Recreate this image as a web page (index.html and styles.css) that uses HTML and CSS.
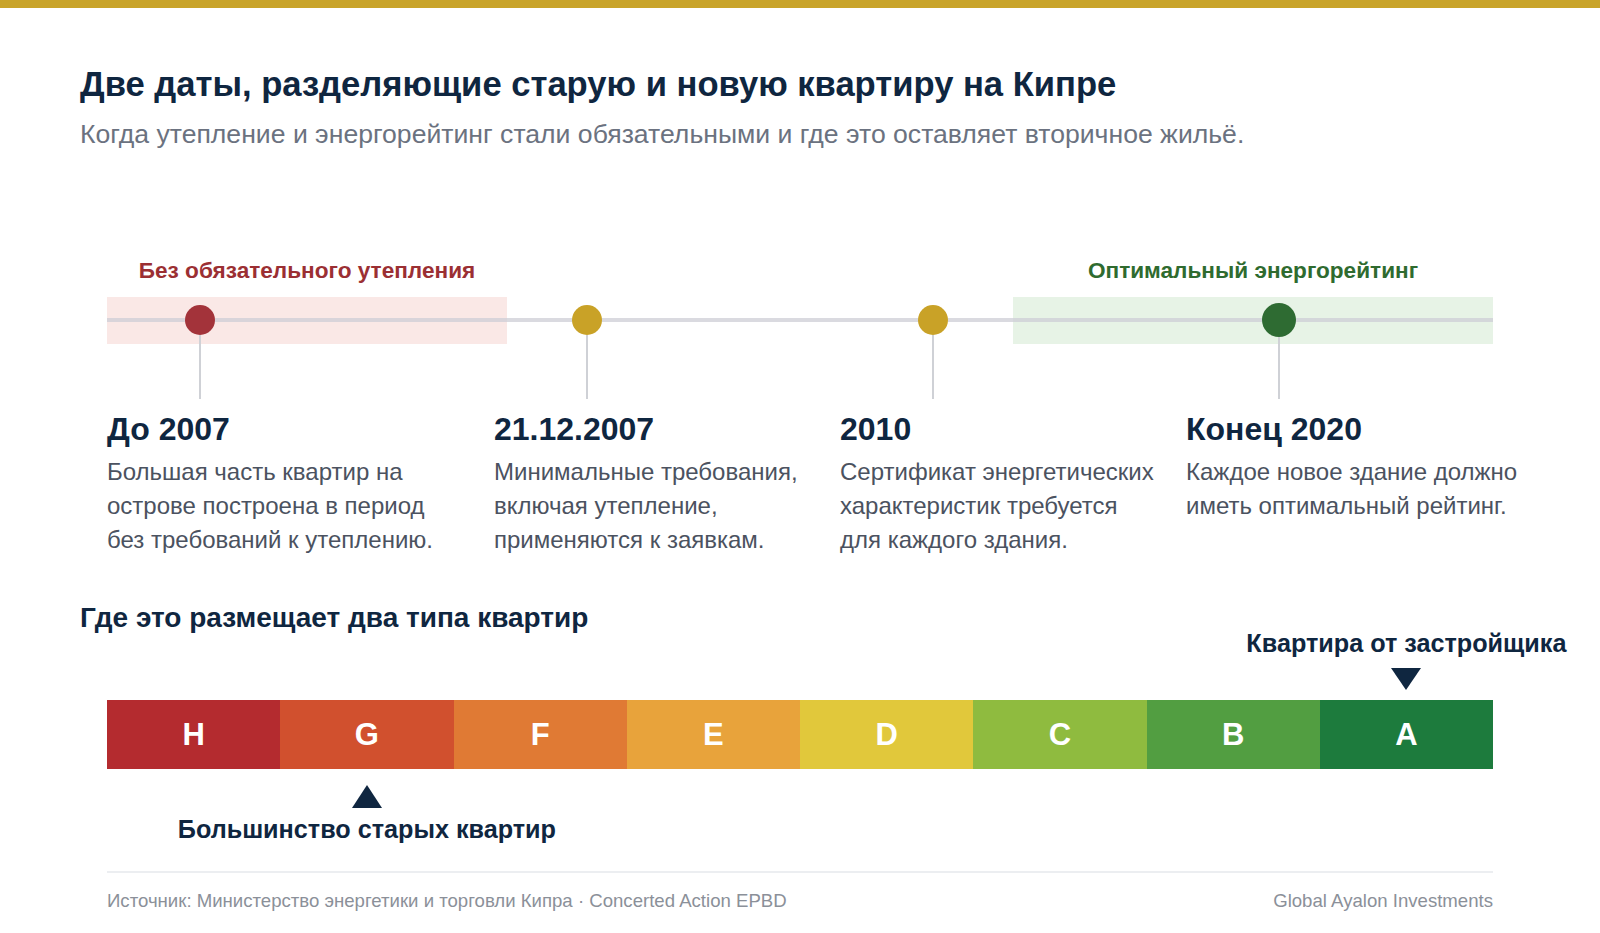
FILE: index.html
```html
<!DOCTYPE html>
<html lang="ru">
<head>
<meta charset="utf-8">
<title>Две даты</title>
<link rel="stylesheet" href="styles.css">
</head>
<body>
<div class="topbar"></div>
<main class="page">
  <header class="header">
    <h1 class="title">Две даты, разделяющие старую и новую квартиру на Кипре</h1>
    <p class="subtitle">Когда утепление и энергорейтинг стали обязательными и где это оставляет вторичное жильё.</p>
  </header>

  <section class="timeline">
    <div class="ranges">
      <div class="range range-old">
        <div class="range-label">Без обязательного утепления</div>
        <div class="range-band"></div>
      </div>
      <div class="range range-opt">
        <div class="range-label">Оптимальный энергорейтинг</div>
        <div class="range-band"></div>
      </div>
    </div>
    <div class="events">
      <div class="event">
        <div class="marker"><span class="dot dot-red"></span><span class="stem"></span></div>
        <h3 class="event-date">До 2007</h3>
        <p class="event-text">Большая часть квартир на<br>острове построена в период<br>без требований к утеплению.</p>
      </div>
      <div class="event">
        <div class="marker"><span class="dot dot-gold"></span><span class="stem"></span></div>
        <h3 class="event-date">21.12.2007</h3>
        <p class="event-text">Минимальные требования,<br>включая утепление,<br>применяются к заявкам.</p>
      </div>
      <div class="event">
        <div class="marker"><span class="dot dot-gold"></span><span class="stem"></span></div>
        <h3 class="event-date">2010</h3>
        <p class="event-text">Сертификат энергетических<br>характеристик требуется<br>для каждого здания.</p>
      </div>
      <div class="event">
        <div class="marker"><span class="dot dot-green"></span><span class="stem"></span></div>
        <h3 class="event-date">Конец 2020</h3>
        <p class="event-text">Каждое новое здание должно<br>иметь оптимальный рейтинг.</p>
      </div>
    </div>
  </section>

  <h2 class="section-title">Где это размещает два типа квартир</h2>

  <section class="scale">
    <div class="scale-row">
      <div class="pointer pointer-new">
        <div class="pointer-label">Квартира от застройщика</div>
        <div class="tri-down"></div>
      </div>
    </div>
    <div class="bar">
      <div class="seg seg-h">H</div>
      <div class="seg seg-g">G</div>
      <div class="seg seg-f">F</div>
      <div class="seg seg-e">E</div>
      <div class="seg seg-d">D</div>
      <div class="seg seg-c">C</div>
      <div class="seg seg-b">B</div>
      <div class="seg seg-a">A</div>
    </div>
    <div class="scale-row">
      <div class="pointer pointer-old">
        <div class="tri-up"></div>
        <div class="pointer-label pointer-label-bottom">Большинство старых квартир</div>
      </div>
    </div>
  </section>

  <footer class="footer">
    <span>Источник: Министерство энергетики и торговли Кипра · Concerted Action EPBD</span>
    <span>Global Ayalon Investments</span>
  </footer>
</main>
</body>
</html>
```

FILE: styles.css
```css
* { box-sizing: border-box; }

body {
  margin: 0;
  background: #ffffff;
  font-family: "Liberation Sans", Arial, sans-serif;
  color: #0d2340;
}

.topbar {
  height: 8px;
  background: #c9a42a;
}

.page {
  padding: 0 80px;
}

.header {
  padding-top: 57px;
}

.title {
  margin: 0;
  font-size: 34.6px;
  line-height: 38px;
  font-weight: 700;
  color: #0f2640;
}

.subtitle {
  margin: 16px 0 0;
  font-size: 26.6px;
  line-height: 31px;
  color: #6b7280;
}

/* timeline */
.timeline {
  margin: 109px 27px 0;
}

.ranges {
  display: flex;
  justify-content: space-between;
}

.range-old { width: 400px; }
.range-opt { width: 480px; }

.range-label {
  text-align: center;
  font-size: 22.6px;
  line-height: 24px;
  font-weight: 700;
  white-space: nowrap;
}

.range-old .range-label { color: #9b2f33; }
.range-opt .range-label { color: #2f6b2f; }

.range-band {
  margin-top: 14px;
  height: 47px;
}

.range-old .range-band { background: #fae8e6; }
.range-opt .range-band { background: #e7f3e6; }

.events {
  position: relative;
  margin-top: -47px;
  display: grid;
  grid-template-columns: 387px 346px 346px 307px;
}

.events::before {
  content: "";
  position: absolute;
  left: 0;
  right: 0;
  top: 21px;
  height: 4px;
  background: rgba(205, 206, 214, 0.75);
}

.event {
  position: relative;
}

.marker {
  width: 186px;
  height: 102px;
  display: flex;
  flex-direction: column;
  align-items: center;
}

.dot {
  width: 30px;
  height: 30px;
  margin-top: 8px;
  border-radius: 50%;
  flex: none;
  position: relative;
  z-index: 1;
}

.dot-red { background: #a3333a; }
.dot-gold { background: #c9a227; }
.dot-green {
  width: 34px;
  height: 34px;
  margin-top: 6px;
  background: #2e6b32;
}

.stem {
  width: 2px;
  flex: 1;
  background: #cfd1d6;
}

.event-date {
  margin: 11px 0 0;
  font-size: 32px;
  line-height: 38px;
  font-weight: 700;
  color: #0f2640;
}

.event-text {
  margin: 7px 0 0;
  font-size: 24px;
  line-height: 34px;
  color: #4b5260;
  white-space: nowrap;
}

/* rating scale */
.section-title {
  margin: 48px 0 0;
  font-size: 28px;
  line-height: 26px;
  font-weight: 700;
  color: #0f2640;
}

.scale {
  margin: 0 27px;
}

.scale-row {
  display: grid;
  grid-template-columns: repeat(8, minmax(0, 1fr));
}

.pointer {
  display: flex;
  flex-direction: column;
  align-items: center;
}

.pointer-new { grid-column: 8; }
.pointer-old { grid-column: 2; }

.pointer-label {
  font-size: 25.2px;
  line-height: 24px;
  font-weight: 700;
  color: #0f2640;
  white-space: nowrap;
}

.pointer-label-bottom {
  margin-top: 8px;
  line-height: 26px;
}

.tri-down {
  margin-top: 13px;
  width: 0;
  height: 0;
  border-left: 15px solid transparent;
  border-right: 15px solid transparent;
  border-top: 22px solid #0f2640;
}

.tri-up {
  margin-top: 16px;
  width: 0;
  height: 0;
  border-left: 15px solid transparent;
  border-right: 15px solid transparent;
  border-bottom: 23px solid #0f2640;
}

.bar {
  margin-top: 10px;
  height: 69px;
  display: grid;
  grid-template-columns: repeat(8, minmax(0, 1fr));
}

.seg {
  display: flex;
  align-items: center;
  justify-content: center;
  color: #ffffff;
  font-size: 31px;
  font-weight: 700;
}

.seg-h { background: #b42b2f; }
.seg-g { background: #d1502e; }
.seg-f { background: #e07a34; }
.seg-e { background: #e8a33b; }
.seg-d { background: #e1c83b; }
.seg-c { background: #8fbb3f; }
.seg-b { background: #529e41; }
.seg-a { background: #1d7b3d; }

/* footer */
.footer {
  margin: 29px 27px 0;
  padding-top: 17px;
  border-top: 2px solid #eceef1;
  display: flex;
  justify-content: space-between;
  font-size: 18.6px;
  line-height: 22px;
  color: #8b9099;
}
```
